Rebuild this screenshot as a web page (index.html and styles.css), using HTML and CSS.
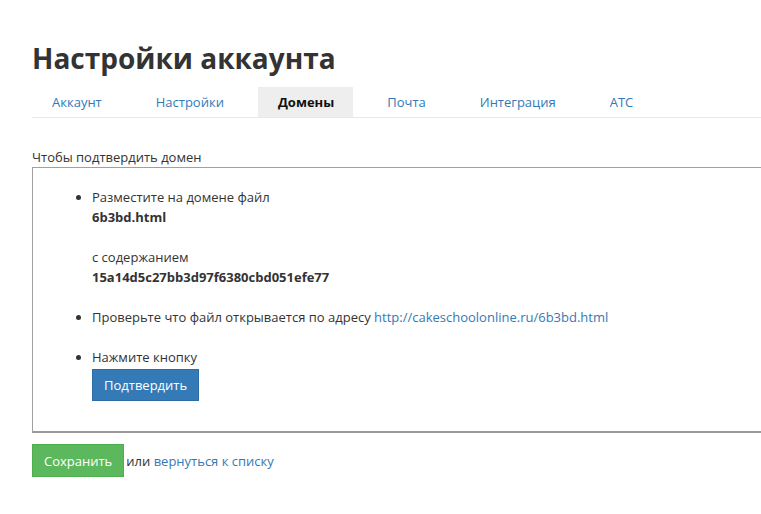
FILE: index.html
```html
<!DOCTYPE html>
<html lang="ru">
  <head>
    <meta charset="UTF-8" />
    <title>Настройки аккаунта</title>
    <link rel="stylesheet" href="styles.css">
  </head>
  <body>
    <div class="page">
      <h1>Настройки аккаунта</h1>
      <ul class="tabs">
        <li><a href="#">Аккаунт</a></li>
        <li><a href="#">Настройки</a></li>
        <li class="active"><a href="#">Домены</a></li>
        <li><a href="#">Почта</a></li>
        <li><a href="#">Интеграция</a></li>
        <li><a href="#">АТС</a></li>
      </ul>

      <div class="field-label">Чтобы подтвердить домен</div>
      <div class="verify-box">
        <ul class="steps">
          <li>
            Разместите на домене файл<br />
            <b>6b3bd.html</b><br />
            <br />
            с содержанием<br />
            <b>15a14d5c27bb3d97f6380cbd051efe77</b>
          </li>
          <li>
            Проверьте что файл открывается по адресу
            <a href="#">http://cakeschoolonline.ru/6b3bd.html</a>
          </li>
          <li>
            Нажмите кнопку<br />
            <button class="btn btn-primary">Подтвердить</button>
          </li>
        </ul>
      </div>

      <div class="actions">
        <button class="btn btn-success">Сохранить</button>
        <span>или <a href="#">вернуться к списку</a></span>
      </div>
    </div>
  </body>
</html>
```

FILE: styles.css
```css
body {
  margin: 0;
  font-family: "Open Sans", Arial, sans-serif;
  font-size: 13px;
  line-height: 20px;
  color: #333;
  background-color: #fff;
  overflow: hidden;
}

a {
  color: #337ab7;
  text-decoration: none;
}

.page {
  padding: 0 0 0 32px;
  width: 760px;
}

h1 {
  margin: 38px 0 0;
  font-size: 28px;
  line-height: 40px;
  font-weight: bold;
  color: #333;
}

.tabs {
  list-style: none;
  margin: 9px 0 0;
  padding: 0;
  display: flex;
  gap: 14px;
  border-bottom: 1px solid #e8e8e8;
}

.tabs li a {
  display: block;
  padding: 5px 20px;
  line-height: 20px;
}

.tabs li.active a {
  background-color: #eee;
  color: #111;
  font-weight: bold;
  padding-right: 19px;
}

.field-label {
  margin-top: 29px;
}

.verify-box {
  width: 760px;
  border: 1px solid #a0a0a0;
  border-right: none;
  border-bottom: 2px solid #9a9a9a;
  padding: 19px 0 10px;
}

.steps {
  margin: 0;
  padding-left: 59px;
}

.steps li {
  margin-bottom: 20px;
}

.btn {
  font-family: inherit;
  font-size: 13px;
  line-height: 20px;
  color: #fff;
  cursor: pointer;
  border-radius: 0;
}

.btn-primary {
  margin-top: 2px;
  padding: 5px 11px;
  background-color: #337ab7;
  border: 1px solid #2e6da4;
}

.btn-success {
  padding: 6px 11px 5px;
  background-color: #5cb85c;
  border: 1px solid #4cae4c;
}

.actions {
  margin-top: 11px;
  display: flex;
  align-items: center;
  gap: 2px;
}
```
